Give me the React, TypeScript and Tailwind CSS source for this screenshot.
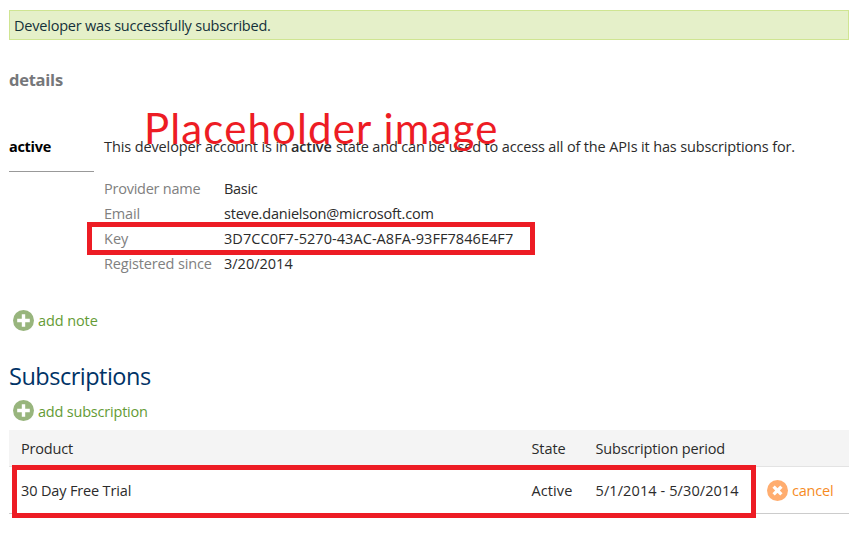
import type { ReactNode } from "react";

function RoundIcon({ className, rotated = false }: { className: string; rotated?: boolean }) {
  return (
    <svg viewBox="0 0 21 21" className={`h-[21px] w-[21px] shrink-0 ${className}`}>
      <circle cx="10.5" cy="10.5" r="10.5" fill="currentColor" />
      <path
        d={rotated ? "M6.6 6.6 14.4 14.4M14.4 6.6 6.6 14.4" : "M10.5 4.2V16.8M4.2 10.5H16.8"}
        stroke="#fff"
        strokeWidth={rotated ? 3.3 : 3.4}
      />
    </svg>
  );
}

function AddLink({ children }: { children: ReactNode }) {
  return (
    <a className="ml-1 flex h-[21px] items-center gap-1 text-[#649b35]">
      <RoundIcon className="text-[#98b57d]" />
      {children}
    </a>
  );
}

function Field({ label, children }: { label: ReactNode; children: ReactNode }) {
  return (
    <div className="flex h-[25px] items-center">
      <dt className="w-[120px] text-[#808080]">{label}</dt>
      <dd>{children}</dd>
    </div>
  );
}

export default function App() {
  return (
    <main className="relative h-[538px] w-[865px] overflow-hidden bg-white pl-[9px] pr-4 pt-[10px] font-['Open_Sans',sans-serif] text-[14.5px] leading-5 whitespace-nowrap text-[#2b2b2b]">
      <div className="flex h-[30px] items-center border border-[#cfe592] bg-[#e5f0c9] pt-0.5 pl-1 tracking-[-0.21px] text-[#14303a]">
        Developer was successfully subscribed.
      </div>

      <h2 className="mt-[30px] text-[16.5px] leading-5 font-bold tracking-[-0.25px] text-[#76777a]">details</h2>

      <section className="mt-[47px] flex">
        <div className="mr-[10px] h-[35px] w-[85px] border-b border-[#999] font-bold tracking-[-0.3px] text-black">
          active
        </div>
        <div>
          <p className="flex">
            <span className="w-[187px] tracking-[-0.11px]">This developer account is in</span>
            <strong className="w-[45px] font-semibold tracking-[-0.15px]">active</strong>
            <span className="tracking-[-0.15px]">
              state and can be used to access all of the APIs it has subscriptions for.
            </span>
          </p>
          <dl className="mt-[19px]">
            <Field label={<span className="tracking-[-0.24px]">Provider name</span>}>
              <span className="tracking-[-0.3px]">Basic</span>
            </Field>
            <Field label={<span className="tracking-[-0.2px]">Email</span>}>
              <span className="tracking-[-0.2px]">steve.danielson@microsoft.com</span>
            </Field>
            <Field label="Key">
              <span className="tracking-[0.06px]">3D7CC0F7-5270-43AC-A8FA-93FF7846E4F7</span>
            </Field>
            <Field label={<span className="tracking-[-0.15px]">Registered since</span>}>3/20/2014</Field>
          </dl>
        </div>
      </section>

      <div className="mt-[34px]">
        <AddLink>
          <span className="tracking-[-0.1px]">add note</span>
        </AddLink>
      </div>

      <h1 className="mt-[30px] text-[23.5px] leading-[30px] tracking-[-0.5px] text-[#003366]">Subscriptions</h1>
      <div className="mt-[9px]">
        <AddLink>
          <span className="pt-0.5 tracking-[-0.2px]">add subscription</span>
        </AddLink>
      </div>

      <div className="mt-[9px]">
        <div className="grid h-[37px] grid-cols-[522.5px_64px_1fr] items-center border-b border-[#e3e3e3] bg-[#f4f4f4] pt-0.5">
          <span className="pl-3 tracking-[-0.2px]">Product</span>
          <span className="tracking-[-0.1px]">State</span>
          <span className="tracking-[-0.15px]">Subscription period</span>
        </div>
        <div className="grid h-[47px] grid-cols-[522.5px_64px_171.5px_1fr] items-center border-b border-[#ccc]">
          <span className="pt-0.5 pl-3 tracking-[-0.15px]">30 Day Free Trial</span>
          <span className="pt-0.5 tracking-[0.1px]">Active</span>
          <span className="pt-0.5 tracking-[0.1px]">5/1/2014 - 5/30/2014</span>
          <a className="flex items-center gap-1 tracking-[-0.2px] text-[#f68b1f]">
            <RoundIcon className="text-[#ffad6f]" rotated />
            <span className="pt-0.5">cancel</span>
          </a>
        </div>
      </div>

      <div className="absolute top-[222px] left-[87px] h-[33px] w-[448px] border-5 border-[#ed1c24]" />
      <div className="absolute top-[465px] left-[12px] h-[53px] w-[744px] border-5 border-[#ed1c24]" />
      <div className="absolute top-[103px] left-[144px] font-['Lato',sans-serif] text-[42px] leading-[50px] tracking-[1.15px] text-[#ed1c24]">
        Placeholder image
      </div>
    </main>
  );
}
